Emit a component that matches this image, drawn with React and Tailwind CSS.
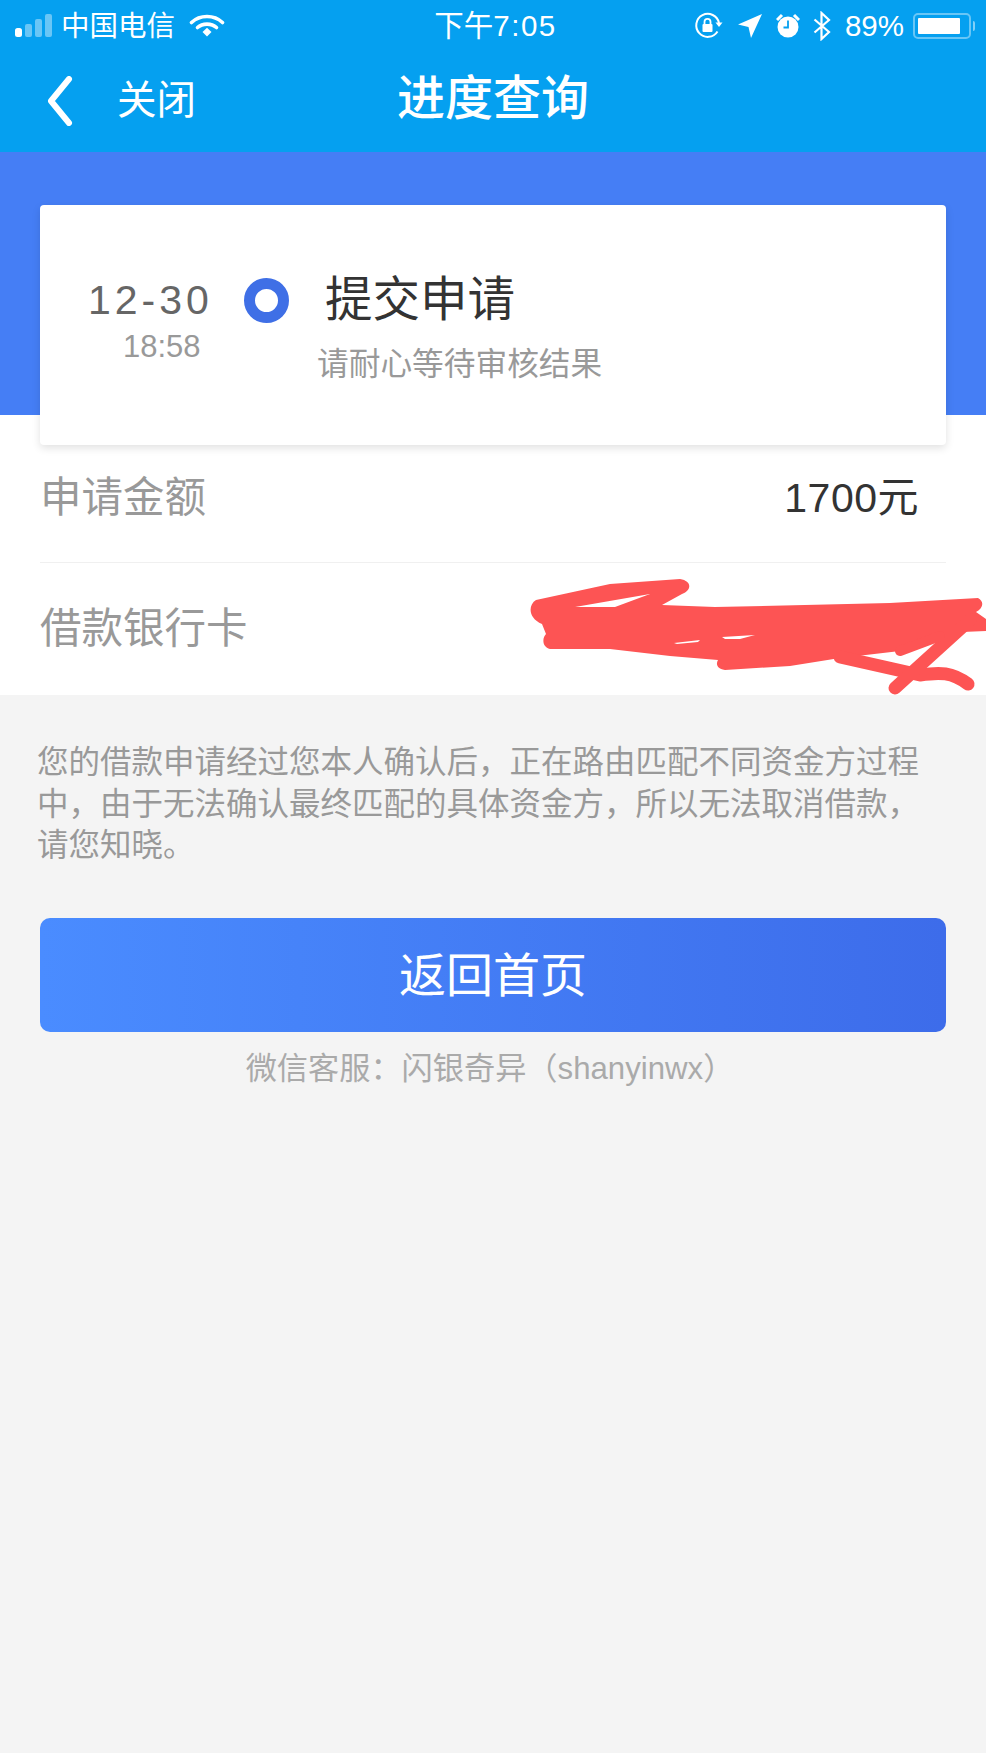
const stack = "font-['Liberation_Sans','Noto_Sans_CJK_SC',sans-serif]"

function StatusBar() {
  return (
    <div className="flex h-[50px] items-center pl-[15px] pr-[11px] pt-[2px] text-white">
      <div className="flex flex-1 items-center">
        <svg width="38" height="24" viewBox="0 0 38 24" className="mr-[8px]">
          <rect x="0" y="14" width="7" height="9" rx="2.5" fill="#fff" />
          <rect x="10" y="10" width="7" height="13" rx="2" fill="#fff" fillOpacity="0.4" />
          <rect x="20" y="5" width="7" height="18" rx="2" fill="#fff" fillOpacity="0.4" />
          <rect x="30" y="0" width="7" height="23" rx="2" fill="#fff" fillOpacity="0.4" />
        </svg>
        <span className="text-[28.5px] leading-none">中国电信</span>
        <svg width="36" height="24" viewBox="0 0 36 24" className="ml-[14px]" fill="none" stroke="#fff" strokeLinecap="round">
          <path d="M2.5 8.5C11 0.5 25 0.5 33.5 8.5" strokeWidth="3.6" />
          <path d="M8.5 13.5C13.5 9 22.5 9 27.5 13.5" strokeWidth="3.6" />
          <path d="M13.5 18L18 13.8 22.5 18 18 22.5Z" fill="#fff" stroke="none" />
        </svg>
      </div>
      <span className="ml-[1px] text-[29.5px] leading-none">
        下午<span className="tracking-[1.5px]">7:05</span>
      </span>
      <div className="flex flex-1 items-center justify-end">
        <svg width="30" height="30" viewBox="0 0 30 30" fill="none" stroke="#fff">
          <path d="M24.5 20.5A11.5 11.5 0 1 1 26 12" strokeWidth="2" />
          <path d="M22.5 11.5h7l-3.5 4.5z" fill="#fff" stroke="none" />
          <rect x="9.5" y="13" width="10" height="8" rx="1" fill="#fff" stroke="none" />
          <path d="M11.5 13v-2.2a3 3 0 0 1 6 0V13" strokeWidth="1.8" />
        </svg>
        <svg width="26" height="26" viewBox="0 0 26 26" className="ml-[14px]">
          <path d="M25 1L14 25 11.5 14 1 11.5Z" fill="#fff" />
        </svg>
        <svg width="24" height="26" viewBox="0 0 24 26" className="ml-[13px]">
          <path d="M1 7L6 2M23 7L18 2" stroke="#fff" strokeWidth="3" />
          <circle cx="12" cy="14" r="10.5" fill="#fff" />
          <path d="M12 7.5V14.5H7.5" fill="none" stroke="#05a0f0" strokeWidth="1.8" />
        </svg>
        <svg width="18" height="30" viewBox="0 0 18 30" className="ml-[13px]" fill="none" stroke="#fff" strokeWidth="2.2">
          <path d="M1.5 8.5L16 21 8.5 28V2L16 9 1.5 21.5" />
        </svg>
        <span className="ml-[14px] text-[29.5px] leading-none">89%</span>
        <div className="ml-[9px] h-[26px] w-[58px] rounded-[5px] border-2 border-white/40 p-[3px]">
          <div className="h-full w-[88%] rounded-[1px] bg-white" />
        </div>
        <div className="ml-[2px] h-[10px] w-[2px] rounded-r-sm bg-white/50" />
      </div>
    </div>
  )
}

function Row({ label, children, className }) {
  return (
    <div className={`flex items-center justify-between ${className}`}>
      <span className="text-[41.5px] leading-none text-[#999]">{label}</span>
      {children}
    </div>
  )
}

export default function App() {
  return (
    <div className={`relative min-h-[1753px] bg-[#f4f4f4] ${stack}`}>
      <div className="h-[152px] bg-[#05a0f0]">
        <StatusBar />
        <div className="grid h-[102px] grid-cols-[1fr_auto_1fr] items-center pb-[4px] text-white">
          <div className="flex items-center pl-[47px] pt-[3px]">
            <svg width="26" height="50" viewBox="0 0 26 50" fill="none" stroke="#fff" strokeWidth="6" strokeLinecap="round" strokeLinejoin="round">
              <path d="M22 3L4 25 22 47" />
            </svg>
            <span className="ml-[44px] text-[39.5px] leading-none">关闭</span>
          </div>
          <h1 className="text-[48px] font-medium leading-none">进度查询</h1>
        </div>
      </div>

      <div className="h-[263px] bg-[#457ef5] px-[40px] pt-[53px]">
        <div className="relative z-10 flex h-[240px] rounded-[4px] bg-white shadow-[0_3px_8px_rgba(0,0,0,0.12)]">
          <div className="ml-[48px] mt-[73px] w-[122px]">
            <div className="whitespace-nowrap text-center text-[41px] leading-[44px] tracking-[4px] text-[#666]">12-30</div>
            <div className="mt-[7px] pl-[35px] text-[31px] leading-[36px] text-[#999]">18:58</div>
          </div>
          <div className="ml-[34px] mt-[73px] h-[45px] w-[45px] rounded-full border-[11px] border-[#3f6fe6] bg-white" />
          <div className="ml-[28px] mt-[65px]">
            <div className="pl-[8px] text-[47.5px] leading-[60px] text-[#333]">提交申请</div>
            <div className="mt-[13px] text-[31.7px] leading-[42px] text-[#999]">请耐心等待审核结果</div>
          </div>
        </div>
      </div>

      <div className="h-[280px] bg-white px-[40px] pt-[30px]">
        <Row label="申请金额" className="h-[118px] border-b border-[#f0f0f0] pb-[11px] pr-[27px]">
          <span className="text-[41px] leading-none tracking-[0.5px] text-[#333]">1700元</span>
        </Row>
        <Row label="借款银行卡" className="h-[132px]" />
      </div>

      {/* 截图上手涂的红色遮挡 */}
      <svg className="absolute left-[500px] top-[550px]" width="486" height="160" viewBox="0 0 486 160" fill="none" stroke="#fd5454" strokeLinecap="round" strokeLinejoin="round">
        <path
          fill="#fd5454"
          stroke="none"
          fillRule="evenodd"
          d="M36 50L110 34 180 29C192 31 192 40 182 44L162 55 215 57 390 53 478 48C484 51 484 58 476 62L486 69V81L462 82 440 90 400 101 340 108 290 116 225 120C216 119 216 113 218 110L170 106 110 99 50 99C42 97 42 88 46 84L42 74C28 68 28 55 36 50ZM75 57L150 44 115 57ZM174 93L200 90 198 92 177 94ZM222 87L255 85 240 89 225 89Z"
        />
        <path d="M340 107L420 125C440 122 452 122 468 134" strokeWidth="13" />
        <path d="M395 138L470 70" strokeWidth="13" />
        <path d="M400 101L440 86" strokeWidth="10" />
      </svg>

      <div className="px-[37px] pt-[47px]">
        <p className="text-[31.5px] leading-[41.5px] text-[#999]">
          您的借款申请经过您本人确认后，正在路由匹配不同资金方过程中，由于无法确认最终匹配的具体资金方，所以无法取消借款，请您知晓。
        </p>
      </div>
      <div className="px-[40px] pt-[51.5px]">
        <button className="block h-[114px] w-full rounded-[10px] bg-gradient-to-r from-[#4a8cff] to-[#3d6cea] pt-[3px] text-[47px] text-white">
          返回首页
        </button>
        <p className="mt-[18px] pr-[6px] text-center text-[31.2px] leading-[38px] text-[#aaa]">微信客服：闪银奇异（shanyinwx）</p>
      </div>
    </div>
  )
}
